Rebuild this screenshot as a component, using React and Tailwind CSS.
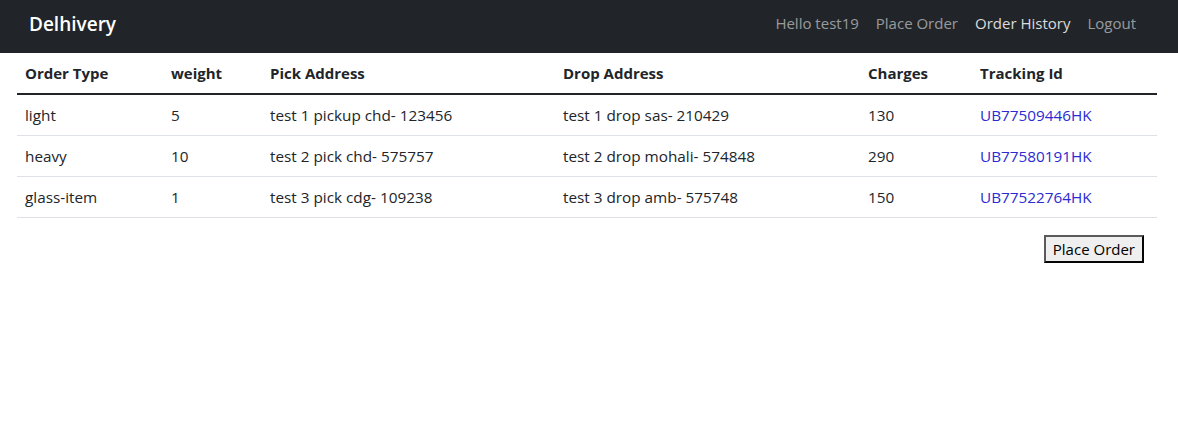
import React from "react";

const rows = [
  ["light", "5", "test 1 pickup chd- 123456", "test 1 drop sas- 210429", "130", "UB77509446HK"],
  ["heavy", "10", "test 2 pick chd- 575757", "test 2 drop mohali- 574848", "290", "UB77580191HK"],
  ["glass-item", "1", "test 3 pick cdg- 109238", "test 3 drop amb- 575748", "150", "UB77522764HK"],
];

const widths = ["w-[146px]", "w-[99px]", "w-[293px]", "w-[305px]", "w-[112px]", "w-[185px]"];

export default function App() {
  return (
    <div className="min-h-[447px] bg-white text-[#212529] text-[16px] leading-6" style={{ fontFamily: '"Open Sans", "Noto Sans", Arial, sans-serif' }}>
      <nav className="h-[53px] bg-[#212529] flex items-center justify-between pl-[29px] pr-[42px]">
        <a className="text-white text-[19px] font-semibold leading-[30px] pb-[5px]">Delhivery</a>
        <div className="flex items-center gap-[17px] text-[15px] pb-[8px]">
          <span className="text-[rgba(255,255,255,0.55)]">Hello test19</span>
          <span className="text-[rgba(255,255,255,0.55)]">Place Order</span>
          <span className="text-[rgba(255,255,255,0.85)]">Order History</span>
          <span className="text-[rgba(255,255,255,0.55)]">Logout</span>
        </div>
      </nav>
      <div className="ml-[17px] w-[1140px]">
        <table className="w-full border-collapse table-fixed text-[15.3px]">
          <thead>
            <tr className="h-[40px]">
              {["Order Type", "weight", "Pick Address", "Drop Address", "Charges", "Tracking Id"].map((h, i) => (
                <th key={h} className={`${widths[i]} text-left font-bold px-2 py-2 text-[15px]`}>{h}</th>
              ))}
            </tr>
          </thead>
          <tbody className="border-t-2 border-[#212529]">
            {rows.map((r) => (
              <tr key={r[0]} className="h-[41px] border-b border-[#dee2e6]">
                {r.map((c, i) => (
                  <td key={i} className={`px-2 py-2 ${i === 5 ? "text-[#2b2bd2]" : ""}`}>{c}</td>
                ))}
              </tr>
            ))}
          </tbody>
        </table>
        <div className="flex justify-end mt-[17px] pr-[13px]">
          <button className="h-[28px] px-[7px] bg-[#efefef] border-2 border-[#5a5a5a] text-[15px] text-black leading-5" style={{ borderStyle: "outset" }}>
            Place Order
          </button>
        </div>
      </div>
    </div>
  );
}
